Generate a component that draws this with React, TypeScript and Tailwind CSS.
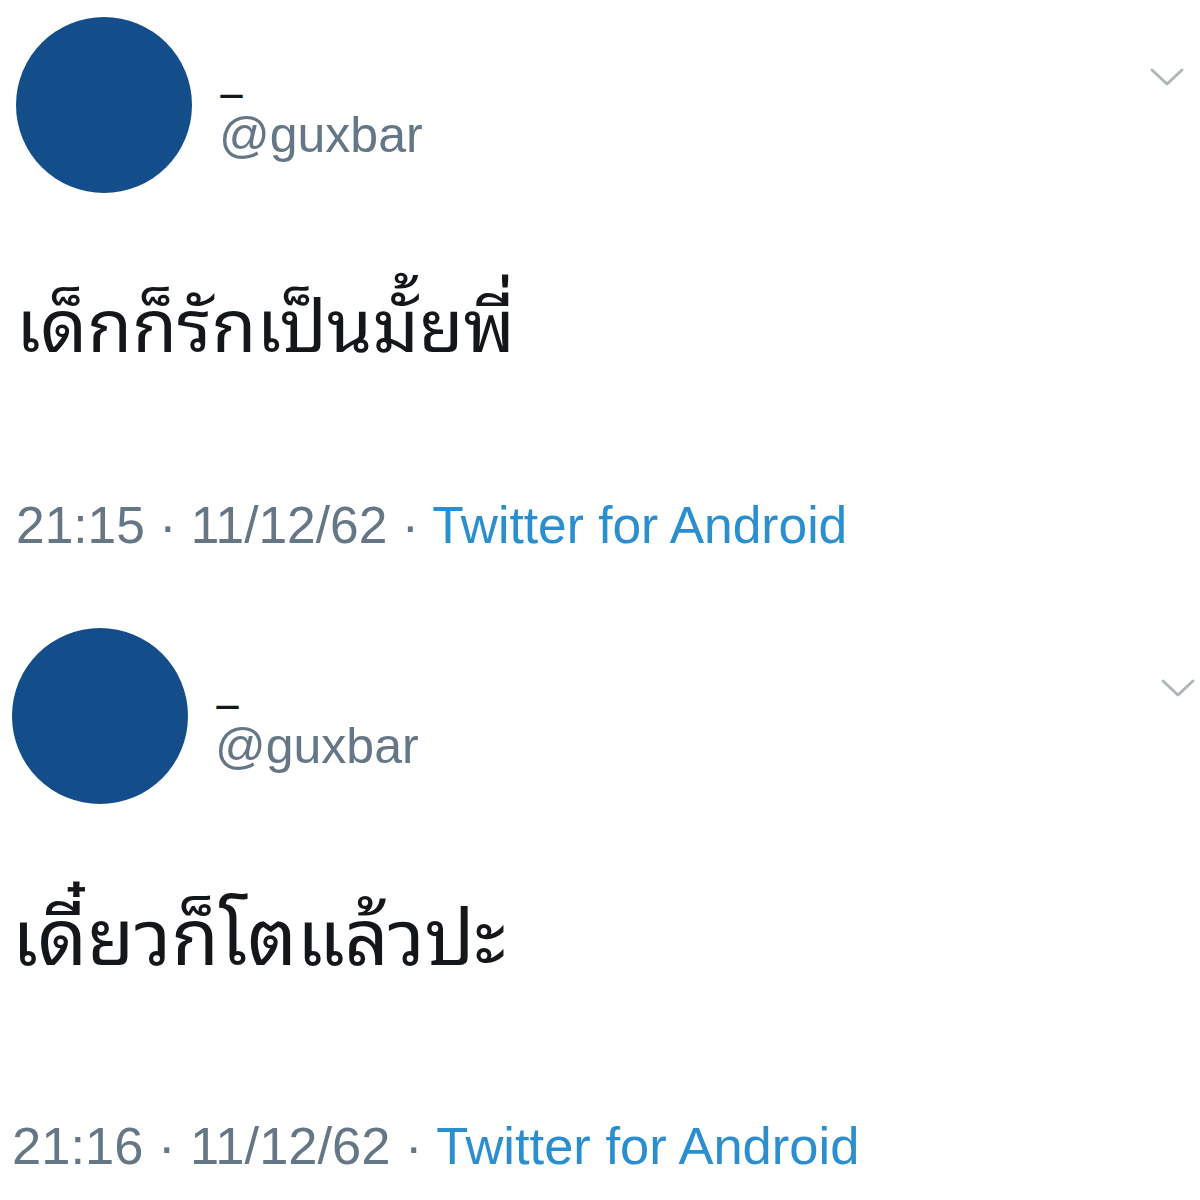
import React from 'react';

const tweets = [
  {
    text: 'เด็กก็รักเป็นมั้ยพี่',
    time: '21:15',
    date: '11/12/62',
    wrap: 'pt-[17px] pl-[16px] pr-[15px]',
    body: 'mt-[89px] text-[73px]',
    stamp: 'mt-[123px] text-[51.5px]',
    chevron: 'mr-0',
  },
  {
    text: 'เดี๋ยวก็โตแล้วปะ',
    time: '21:16',
    date: '11/12/62',
    wrap: 'pt-[73px] pl-[12px] pr-[8px]',
    body: 'mt-[89px] text-[77px]',
    stamp: 'mt-[133px] text-[52.5px]',
    chevron: 'mr-[-4px]',
  },
];

function Chevron({ className }: { className: string }) {
  return (
    <svg viewBox="0 0 36 20" className={className} fill="none" stroke="#aeb6be" strokeWidth="3" strokeLinecap="round" strokeLinejoin="round">
      <path d="M3 3 L18 17 L33 3" />
    </svg>
  );
}

export default function App() {
  return (
    <div className="w-[1200px] h-[1200px] bg-white overflow-hidden font-['Liberation_Sans','Noto_Sans_Thai_Looped','Loma','Garuda','Noto_Sans_Thai',sans-serif]">
      {tweets.map((t, i) => (
        <div key={i} className={t.wrap}>
          <div className="flex items-start">
            <div className="w-[176px] h-[176px] rounded-full bg-[#134e8a] shrink-0" />
            <div className="ml-[27px] pt-[66px] flex flex-col">
              <span className="font-['DejaVu_Sans',sans-serif] text-[25px] leading-[24px] h-[24px] font-bold text-[#14171a]">—</span>
              <span className="text-[50px] leading-[56px] text-[#657786]">@guxbar</span>
            </div>
            <Chevron className={`ml-auto mt-[50px] w-[36px] h-[20px] ${t.chevron}`} />
          </div>
          <div className={`${t.body} leading-[90px] text-[#14171a]`}>{t.text}</div>
          <div className={`${t.stamp} leading-[60px] text-[#657786]`}>
            {t.time} · {t.date} · <span className="text-[#2b8fcf]">Twitter for Android</span>
          </div>
        </div>
      ))}
    </div>
  );
}
